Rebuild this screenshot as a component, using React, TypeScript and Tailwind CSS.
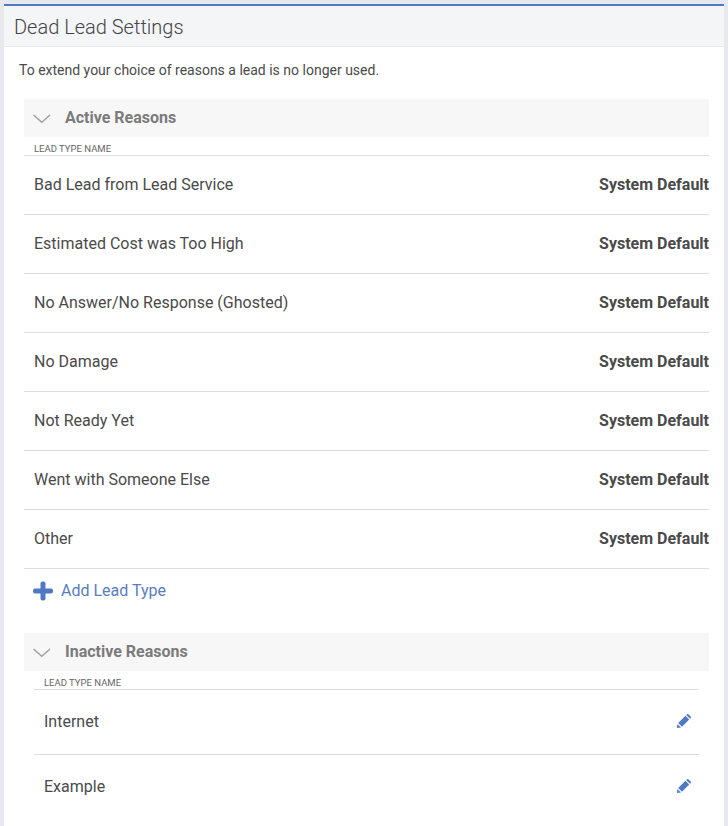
import React from 'react';

const activeReasons = [
  'Bad Lead from Lead Service',
  'Estimated Cost was Too High',
  'No Answer/No Response (Ghosted)',
  'No Damage',
  'Not Ready Yet',
  'Went with Someone Else',
  'Other',
];

const inactiveReasons = ['Internet', 'Example'];

function Chevron() {
  return (
    <svg width="18" height="10" viewBox="0 0 18 10" fill="none" className="ml-[9px] mt-[2px]">
      <path d="M0.5 1 L8.8 8.3 L17 1" stroke="#a0a0a0" strokeWidth="1.5" />
    </svg>
  );
}

function Pencil() {
  return (
    <svg width="14" height="14" viewBox="0 0 14 14" fill="#4f79c3" className="mb-[2px]">
      <path d="M0 14 L0.4 10 L4 13.6 Z" />
      <path d="M1.2 9 L8.4 1.8 L12.2 5.6 L5 12.8 Z" />
      <path d="M9.2 1 L10.1 0.2 Q10.7 -0.2 11.3 0.2 L13.8 2.7 Q14.2 3.3 13.8 3.9 L13 4.8 Z" />
    </svg>
  );
}

function SectionBar({ title }: { title: string }) {
  return (
    <div className="flex h-[38px] items-center bg-[#f7f7f7]">
      <Chevron />
      <span className="ml-[14px] text-[16px] font-bold text-[#7b7b7b]">{title}</span>
    </div>
  );
}

export default function App() {
  return (
    <div
      className="h-[826px] overflow-hidden bg-[#e7e9ee] pl-1 pr-1 pt-1 text-[#4a4a4a]"
      style={{ fontFamily: 'Roboto, sans-serif' }}
    >
      <div className="h-full border-t-2 border-[#4f79c3] bg-white">
        <div className="flex h-[41px] items-center border-b border-[#e6e8ec] bg-[#f4f5f7] pl-[10px] pt-[1px] text-[20px] font-light text-[#444]">
          Dead Lead Settings
        </div>

        <p className="pl-[15px] pt-[14px] text-[14px] leading-[18px]">
          To extend your choice of reasons a lead is no longer used.
        </p>

        <div className="ml-5 mr-[15px] mt-5">
          <SectionBar title="Active Reasons" />
          <div className="border-b border-[#dcdcdc] pl-[10px] pt-[5px] text-[9.5px] uppercase leading-[13px] text-[#666]">
            Lead Type Name
          </div>
          {activeReasons.map((reason) => (
            <div
              key={reason}
              className="flex h-[59px] items-center justify-between border-b border-[#dcdcdc] pl-[10px] text-[16px]"
            >
              <span>{reason}</span>
              <span className="font-bold">System Default</span>
            </div>
          ))}

          <div className="flex h-[44px] items-center pl-[9px] text-[16px] text-[#5a7dbf]">
            <svg width="20" height="20" viewBox="0 0 20 20" fill="#4f79c3">
              <rect x="7.5" y="0.5" width="5" height="19" rx="2" />
              <rect x="0" y="7.5" width="20" height="5" rx="2" />
            </svg>
            <span className="ml-[8px]">Add Lead Type</span>
          </div>

          <div className="mt-[20px]">
            <SectionBar title="Inactive Reasons" />
            <div className="mx-[10px]">
              <div className="border-b border-[#dcdcdc] pl-[10px] pt-[5px] text-[9.5px] uppercase leading-[13px] text-[#666]">
                Lead Type Name
              </div>
              {inactiveReasons.map((reason, i) => (
                <div
                  key={reason}
                  className={`flex h-[65px] items-center justify-between border-b pl-[10px] pr-[8px] text-[16px] ${
                    i === 0 ? 'border-[#dcdcdc]' : 'border-transparent'
                  }`}
                >
                  <span>{reason}</span>
                  <Pencil />
                </div>
              ))}
            </div>
          </div>
        </div>
      </div>
    </div>
  );
}
